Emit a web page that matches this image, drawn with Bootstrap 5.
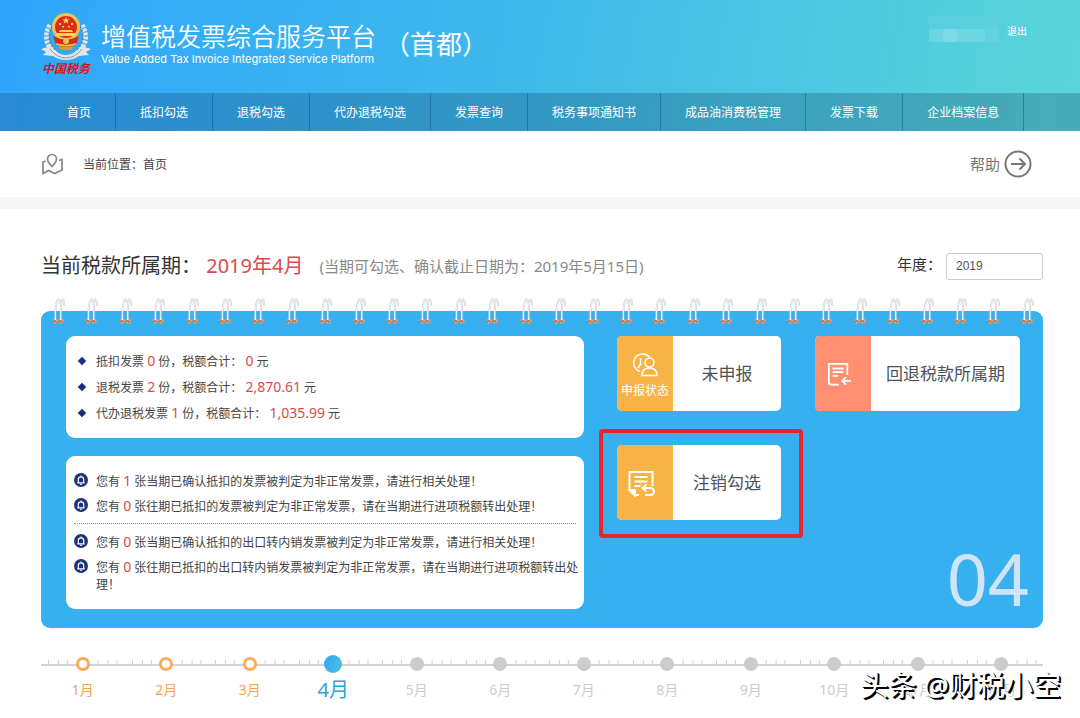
<!DOCTYPE html>
<html lang="zh-CN">
<head>
<meta charset="utf-8">
<meta name="viewport" content="width=device-width, initial-scale=1">
<title>增值税发票综合服务平台</title>
<link href="https://cdn.jsdelivr.net/npm/bootstrap@5.3.0/dist/css/bootstrap.min.css" rel="stylesheet">
<style>
  body { font-family: "Noto Sans", "Noto Sans CJK SC", sans-serif; font-size: 12px; line-height: 17px; color: #444; background: #fff; }
  .page-x { padding-left: 41px; padding-right: 37px; }
  .site-header { background: linear-gradient(100deg, #2fa6fd 0%, #3fb9ea 48%, #5ad6d9 100%); color: #fff; }
  .brand-bar { height: 93px; }
  .emblem { width: 50px; }
  .emblem-text { font-size: 12px; line-height: 14px; font-weight: 700; font-style: italic; color: #d8141e; }
  .brand-text { margin-left: 10px; }
  .site-title { font-size: 25px; line-height: 32px; font-weight: 350; }
  .site-sub { font-family: Inter, sans-serif; font-size: 11px; line-height: 15px; }
  .site-city { font-size: 26px; line-height: 32px; }
  .masked-user { display: grid; grid-template-columns: repeat(5, 14px); grid-template-rows: 13px 13px; }
  .masked-user i { background: rgba(255,255,255,.04); }
  .masked-user i:nth-child(n+6) { background: rgba(255,255,255,.15); }
  .masked-user i:nth-child(7) { background: rgba(255,255,255,.24); }
  .masked-user i:nth-child(10) { background: rgba(255,255,255,.08); }
  .logout { font-size: 10px; line-height: 14px; }
  .main-nav { background: rgba(10,50,85,.25); padding-left: 43px; }
  .main-nav .nav-link { color: #fff; font-size: 12px; line-height: 18px; padding: 11px 24px 9px; border-right: 1px solid rgba(0,60,100,.35); white-space: nowrap; }
  .crumb-bar { height: 78px; border-bottom: 12px solid #f6f6f6; padding-right: 48px; }
  .help-link { font-size: 15px; color: #777; }
  .period-row { padding: 42px 0 17px; }
  .period { font-size: 20px; line-height: 30px; color: #333; }
  .hot { color: #d94b4b; }
  .period-note { font-size: 15px; color: #888; }
  .year-label { font-size: 15px; color: #333; }
  .year-input { width: 97px; height: 27px; font-family: "Liberation Sans", sans-serif; font-size: 12px; padding: 0 9px; border-radius: 3px; color: #555; border-color: #ccc; }
  .board-wrap { padding-top: 13px; }
  .board { background: #37b0f0; border-radius: 9px; padding: 25px 23px 19px 25px; display: grid; grid-template-columns: 518fr 403fr; gap: 33px; }
  .rings { top: 0; left: 11px; right: 9px; }
  .panel-box { background: #fff; border-radius: 9px; }
  .totals { padding: 13px 8px 11px; line-height: 26px; margin-bottom: 18px; }
  .alerts { padding: 17px 4px 16px 8px; }
  .num { font-size: 14px; line-height: 14px; color: #d94b4b; }
  .dot-cell { width: 22px; flex: none; }
  .diamond { width: 6px; height: 6px; margin: 9px 0 0 5px; background: #1c2f78; transform: rotate(45deg); }
  .dash { border-top: 1px dotted #888; margin: 8px 4px 10px 0; }
  .tile { border: 0; padding: 0; height: 75px; background: #fff; border-radius: 5px; overflow: hidden; color: #4d5358; font-size: 17px; line-height: 26px; }
  .tile-s { width: 164px; }
  .tile-l { width: 205px; }
  .tile-icon { width: 56px; background: #f8b347; color: #fff; font-size: 12px; line-height: 17px; }
  .tile-icon.coral { background: #ff8f70; }
  .tile-row { gap: 34px; }
  .highlight { inset: -16px -22px -18px -18px; border: 4px solid #e8262a; border-radius: 4px; }
  .big-month { font-size: 72px; line-height: 38px; padding-bottom: 12px; color: #cfe4f6; margin-right: -9px; }
  .timeline { margin-top: 26px; }
  .month { flex: 1 1 0; text-align: center; font-size: 14px; line-height: 20px; color: #ccc; }
  .track { height: 20px; }
  .track-line { left: 0; right: 0; top: 10px; height: 2px; background: #d3d3d3; }
  .ticks { left: 0; top: 5px; width: 100%; height: 5px; }
  .node { width: 14px; height: 14px; border-radius: 50%; background: #ccc; z-index: 1; }
  .month a { color: inherit; text-decoration: none; display: block; margin-top: 6px; }
  .past { color: #f5a34f; }
  .past .node { background: #fff; border: 3px solid #f8ab58; }
  .now { color: #2ea3dc; font-size: 20px; }
  .now .node { width: 18px; height: 18px; background: linear-gradient(110deg, #2fa6f5, #4cc4da); }
  .sign { right: 19px; bottom: 13px; font-size: 28px; line-height: 40px; color: #fff; text-shadow: 1px 1px 0 #000, 2px 2px 0 #000; z-index: 3; white-space: nowrap; }
</style>
</head>
<body class="position-relative min-vh-100">
<svg class="d-none" xmlns="http://www.w3.org/2000/svg">
  <symbol id="ring" viewBox="0 0 13 27">
    <g fill="#e3a277"><circle cx="3.2" cy="23" r="2.6"/><circle cx="9" cy="23" r="2.6"/></g>
    <path d="M.8 24.500q2-4 3.500 0M6.500 24.500q2-4 3.500 0" stroke="#875d49" fill="none"/>
    <path d="M3.400 22Q3 5 6 1.500Q8 1 8 6M8.700 22Q8.500 5 10 1.500Q12 1 12 8" fill="none" stroke="#c3c7ca" stroke-width="1.800"/>
    <path d="M3.400 22Q3 5 6 1.500Q8 1 8 6M8.700 22Q8.500 5 10 1.500Q12 1 12 8" fill="none" stroke="#f1f1f1" stroke-width="1.100"/>
  </symbol>
  <symbol id="bell" viewBox="0 0 14 14">
    <circle cx="7" cy="7" r="7" fill="#1d3576"/>
    <path d="M3.300 9.800h7.400M4.300 9.500V6.500a2.700 2.700 0 0 1 5.400 0v3M7 2.500v1.300" fill="none" stroke="#fff" stroke-width="1.200"/>
    <path d="M6 11.300h2" stroke="#fff"/>
  </symbol>
  <symbol id="ticks" viewBox="0 0 84 5" preserveAspectRatio="none">
    <path d="M7.500 1v4M17.500 1v4M26.500 1v4M57.500 1v4M67.500 1v4M76.500 1v4" stroke="#d0d0d0"/>
  </symbol>
</svg>

<header class="site-header">
  <div class="brand-bar page-x d-flex align-items-start">
    <div class="emblem text-center mt-2 pt-1">
      <svg class="d-block" width="50" height="50" viewBox="0 0 50 50" aria-hidden="true">
        <path d="M9 13Q0 29 14 41M41 13Q50 29 36 41" fill="none" stroke="#dfe3e4" stroke-width="5" stroke-dasharray="3 1"/>
        <path d="M11 14Q4 28 15 39M39 14Q46 28 35 39" fill="none" stroke="#66777c" stroke-width="1.500" stroke-dasharray="2 2"/>
        <path d="M0 37l10-3q7 9 15 9t15-9l10 3-5 3 3 3-10 1q-6 4-13 4t-13-4L2 43l3-3z" fill="#dfe5e9"/>
        <path d="M9 37q7 9 16 9t16-9" fill="none" stroke="#8c9aa5"/>
        <path d="M17 29h16l-2 9H19z" fill="#cfa02d"/>
        <circle cx="25" cy="15" r="14" fill="#efc54a"/>
        <circle cx="25" cy="15" r="11" fill="#e02a1e"/>
        <path d="M25 5l1 2.500h2.700L26.500 9l.8 2.600L25 10l-2.300 1.600.8-2.600-2.200-1.500H24z" fill="#ffe04a"/>
        <path d="M18 11h2v2h-2zM30 11h2v2h-2zM21 14h2v1.500h-2zM27 14h2v1.500h-2zM19 18h12l1 2H18zM16 21h18v3H16z" fill="#ffd945"/>
        <path d="M12 24q13 7 26 0l-3 9q-10 3-20 0z" fill="#d92a1d"/>
        <path d="M15 32q10 3 20 0" stroke="#f0c648" fill="none" stroke-width="1.500"/>
        <circle cx="25" cy="29" r="3" fill="#f0c648"/>
      </svg>
      <div class="emblem-text">中国税务</div>
    </div>
    <div class="brand-text mt-3 pt-1">
      <div class="site-title">增值税发票综合服务平台</div>
      <div class="site-sub">Value Added Tax Invoice Integrated Service Platform</div>
    </div>
    <div class="site-city ms-2 mt-4 pt-1">（首都）</div>
    <div class="ms-auto d-flex pe-3">
      <div class="masked-user mt-3 me-2"><i></i><i></i><i></i><i></i><i></i><i></i><i></i><i></i><i></i><i></i></div>
      <a href="#" class="logout text-white text-decoration-none mt-4">退出</a>
    </div>
  </div>
  <nav class="main-nav">
    <div class="nav flex-nowrap">
      <a class="nav-link" href="#">首页</a>
      <a class="nav-link" href="#">抵扣勾选</a>
      <a class="nav-link" href="#">退税勾选</a>
      <a class="nav-link" href="#">代办退税勾选</a>
      <a class="nav-link" href="#">发票查询</a>
      <a class="nav-link" href="#">税务事项通知书</a>
      <a class="nav-link" href="#">成品油消费税管理</a>
      <a class="nav-link" href="#">发票下载</a>
      <a class="nav-link" href="#">企业档案信息</a>
    </div>
  </nav>
</header>

<div class="crumb-bar page-x d-flex align-items-center">
  <svg width="22" height="22" viewBox="0 0 22 22" fill="none" stroke="#888" stroke-width="1.700" aria-hidden="true">
    <path d="M11 13.500Q6.500 9 6.500 6a4.500 4.500 0 0 1 9 0Q15.500 9 11 13.500zM4.800 8L2 9v11.500l5.500-3 6 3 7.500-3.500V6.500l-3 1"/>
  </svg>
  <span class="ms-3 ps-1">当前位置：首页</span>
  <a href="#" class="help-link ms-auto d-flex align-items-center gap-1 text-decoration-none">帮助
    <svg width="28" height="28" viewBox="0 0 28 28" fill="none" stroke="#777" stroke-width="2" aria-hidden="true"><circle cx="14" cy="14" r="12.500"/><path d="M7 14h14M15.500 8.500L21 14l-5.500 5.500"/></svg>
  </a>
</div>

<main class="page-x">
  <div class="period-row d-flex align-items-center">
    <div class="period">当前税款所属期： <span class="hot">2019年4月</span></div>
    <div class="period-note ms-3">(当期可勾选、确认截止日期为：2019年5月15日)</div>
    <label for="year" class="year-label ms-auto me-1 pb-1">年度：</label>
    <input id="year" class="form-control year-input" type="text" value="2019">
  </div>

  <div class="board-wrap position-relative">
    <div class="rings position-absolute d-flex justify-content-between" id="rings"></div>
    <div class="board">
      <div class="d-flex flex-column">
        <ul class="panel-box totals list-unstyled">
          <li class="d-flex"><span class="dot-cell"><span class="diamond d-block"></span></span><span>抵扣发票 <span class="num">0</span> 份，税额合计： <span class="num">0</span> 元</span></li>
          <li class="d-flex"><span class="dot-cell"><span class="diamond d-block"></span></span><span>退税发票 <span class="num">2</span> 份，税额合计： <span class="num">2,870.61</span> 元</span></li>
          <li class="d-flex"><span class="dot-cell"><span class="diamond d-block"></span></span><span>代办退税发票 <span class="num">1</span> 份，税额合计： <span class="num">1,035.99</span> 元</span></li>
        </ul>
        <div class="panel-box alerts">
          <div class="d-flex mb-2"><span class="dot-cell"><svg class="d-block" width="14" height="14"><use href="#bell"/></svg></span><span>您有 <span class="num">1</span> 张当期已确认抵扣的发票被判定为非正常发票，请进行相关处理！</span></div>
          <div class="d-flex"><span class="dot-cell"><svg class="d-block" width="14" height="14"><use href="#bell"/></svg></span><span>您有 <span class="num">0</span> 张往期已抵扣的发票被判定为非正常发票，请在当期进行进项税额转出处理！</span></div>
          <div class="dash"></div>
          <div class="d-flex mb-2"><span class="dot-cell"><svg class="d-block" width="14" height="14"><use href="#bell"/></svg></span><span>您有 <span class="num">0</span> 张当期已确认抵扣的出口转内销发票被判定为非正常发票，请进行相关处理！</span></div>
          <div class="d-flex"><span class="dot-cell"><svg class="d-block" width="14" height="14"><use href="#bell"/></svg></span><span>您有 <span class="num">0</span> 张往期已抵扣的出口转内销发票被判定为非正常发票，请在当期进行进项税额转出处理！</span></div>
        </div>
      </div>

      <div class="d-flex flex-column align-items-start tile-row">
        <div class="d-flex tile-row">
          <button type="button" class="tile tile-s d-flex">
            <span class="tile-icon h-100 d-flex flex-column align-items-center justify-content-center pt-1 gap-1">
              <svg width="28" height="26" viewBox="0 0 28 26" fill="none" stroke="#fff" stroke-width="1.500" aria-hidden="true"><path d="M9 19.500A9 9 0 1 1 18.500 5M9.500 6v6.500L7 16"/><circle cx="18.500" cy="10.500" r="4.500"/><path d="M11 23.500q0-7.500 7.500-7.500t7.500 7.500z"/></svg>
              <span>申报状态</span>
            </span>
            <span class="flex-fill align-self-center">未申报</span>
          </button>
          <button type="button" class="tile tile-l d-flex">
            <span class="tile-icon coral h-100 d-flex align-items-center justify-content-center pe-2">
              <svg width="24" height="24" viewBox="0 0 26 26" fill="none" stroke="#fff" stroke-width="2" aria-hidden="true"><path d="M13 24.500H4.500Q2 24.500 2 22V2h20v12M6 7h12M6 11h12M6 15h6M26 20.500h-9M20.500 16.500l-4 4 4 4"/></svg>
            </span>
            <span class="flex-fill align-self-center">回退税款所属期</span>
          </button>
        </div>
        <div class="position-relative">
          <button type="button" class="tile tile-s d-flex">
            <span class="tile-icon h-100 d-flex align-items-center justify-content-center pe-2">
              <svg width="28" height="28" viewBox="0 0 28 28" fill="none" stroke="#fff" stroke-width="2" aria-hidden="true"><path d="M12 26H8L2.500 21V3h23v14M7.500 8h13M7.500 12.500h13M7.500 17h6"/><path d="M2.500 21H7q1 0 1 1v4.500z" fill="#fff"/><path d="M19.500 15.500L15.500 19l4 3.500M16 19h7.500a3 3 0 0 1 0 7H18"/></svg>
            </span>
            <span class="flex-fill align-self-center">注销勾选</span>
          </button>
          <div class="highlight position-absolute pe-none"></div>
        </div>
        <div class="big-month align-self-end mt-auto">04</div>
      </div>
    </div>
  </div>

  <div class="timeline position-relative">
    <div class="track-line position-absolute"></div>
    <div class="d-flex" id="months"></div>
  </div>
</main>
<div class="sign position-absolute">头条 @财税小空</div>

<script src="https://cdn.jsdelivr.net/npm/bootstrap@5.3.0/dist/js/bootstrap.bundle.min.js"></script>
<script>
  document.getElementById('rings').innerHTML =
    '<svg width="13" height="27" aria-hidden="true"><use href="#ring"/></svg>'.repeat(30);
  const current = 4;
  let html = '';
  for (let m = 1; m <= 12; m++) {
    const state = m < current ? 'past' : m === current ? 'now' : '';
    html += `<div class="month ${state}"><div class="track position-relative d-flex align-items-center justify-content-center">
      <svg class="ticks position-absolute" aria-hidden="true"><use href="#ticks"/></svg><span class="node"></span></div><a href="#">${m}月</a></div>`;
  }
  document.getElementById('months').innerHTML = html;
</script>
</body>
</html>
